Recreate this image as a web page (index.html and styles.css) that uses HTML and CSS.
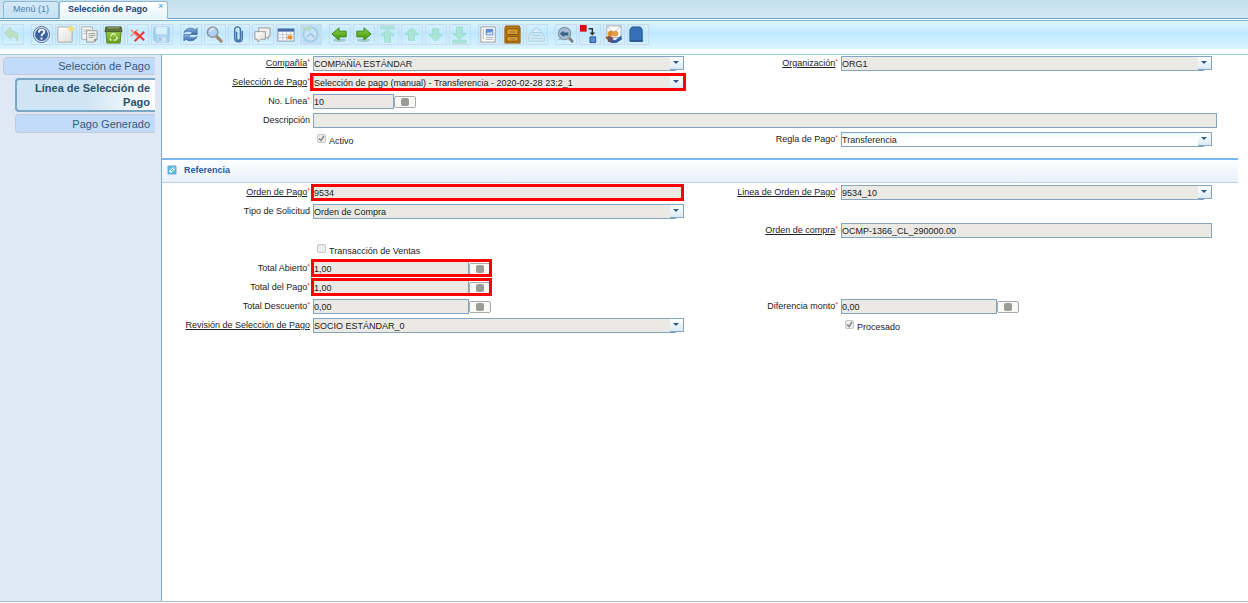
FILE: index.html
```html
<!DOCTYPE html>
<html lang="es">
<head>
<meta charset="utf-8">
<title>Selección de Pago</title>
<link rel="stylesheet" href="styles.css">
</head>
<body>
<svg class="defs" aria-hidden="true">
  <defs>
    <linearGradient id="green" x1="0" y1="0" x2="0" y2="1"><stop offset="0" stop-color="#8fd03c"/><stop offset="1" stop-color="#3c9410"/></linearGradient>
    <linearGradient id="lime" x1="0" y1="0" x2="0" y2="1"><stop offset="0" stop-color="#9ccb45"/><stop offset="1" stop-color="#6a9f22"/></linearGradient>
    <linearGradient id="blue" x1="0" y1="0" x2="0" y2="1"><stop offset="0" stop-color="#8fb4e4"/><stop offset="1" stop-color="#3a68a8"/></linearGradient>
    <linearGradient id="paper" x1="0" y1="0" x2="1" y2="1"><stop offset="0" stop-color="#ffffff"/><stop offset="1" stop-color="#dcdcd8"/></linearGradient>
    <symbol id="arrow-left" viewBox="0 0 20 20"><ellipse cx="10" cy="16" rx="7" ry="2" fill="#6d9a8a" opacity=".4"/><path d="M2 9.500 9.500 3v3.500H17v6H9.500V16z" fill="url(#green)" stroke="#3f8519"/></symbol>
    <symbol id="arrow-up" viewBox="0 0 20 20"><path d="m10 3 7 7h-4v6H7v-6H3z" fill="#8fe0b0" stroke="#75c99d"/></symbol>
  </defs>
</svg>
<nav class="tabs">
  <button class="tab">Menú (1)</button>
  <button class="tab tab-active">Selección de Pago</button>
  <button class="tab-close" aria-label="Cerrar">×</button>
</nav>
<header class="toolbar">
  <div class="tools">
    <button class="tool faded" aria-label="Deshacer"><svg viewBox="0 0 20 20"><path d="M2 8 8 2v4c6 0 9 4 7 11-1-4-3-5-7-5v3z" fill="#b9d68a" stroke="#9cc07c"/></svg></button>
  </div>
  <div class="tools">
    <button class="tool" aria-label="Ayuda"><svg viewBox="0 0 20 20"><circle cx="10" cy="10" r="8.500" fill="#d5dfed" stroke="#5b6f91"/><circle cx="10" cy="10" r="6.800" fill="#3b619e"/><path d="M7.300 8c0-4 5.600-4 5.600-.8 0 2.200-2.800 2-2.800 4.500M10 13.200v2" fill="none" stroke="#fff" stroke-width="2"/></svg></button>
    <button class="tool" aria-label="Nuevo"><svg viewBox="0 0 20 20"><path d="M2 2h15v16H2z" fill="url(#paper)" stroke="#aaa9a0"/><circle cx="16" cy="4" r="2.500" fill="#f6e36e"/><path d="M16 0v8M12 4h8" stroke="#f3df62"/></svg></button>
    <button class="tool" aria-label="Copiar"><svg viewBox="0 0 20 20"><path d="M2 2h11v13H2z" fill="#f7f7f5" stroke="#aaa"/><path d="M4 5h7M4 7h7M4 9h7" stroke="#bbb"/><path d="M7 6h11v9l-3 3H7z" fill="url(#paper)" stroke="#999"/><path d="M9 9h7M9 11h7M9 13h5" stroke="#999"/><path d="M15 18v-3h3z" fill="#777"/></svg></button>
    <button class="tool" aria-label="Eliminar"><svg viewBox="0 0 20 20"><path d="M2 6h16l-1 13H3z" fill="url(#lime)" stroke="#5d8424"/><path d="M2 2h16l1 5H1z" fill="#5d7236" stroke="#465a30"/><path d="M4 3h12" stroke="#a1b485"/><path d="m7 12 2-3h2l1 2m1 1 1 2-2 2h-2m-2 0H7l-1-2" fill="none" stroke="#e1f1c9" stroke-width="1.300"/></svg></button>
    <button class="tool" aria-label="Eliminar selección"><svg viewBox="0 0 20 20"><path d="m3 5 7 7m0-7-7 7" stroke="#ef8f80" stroke-width="1.600"/><path d="m7 7 10 9m0-9L7 17" stroke="#f03a34" stroke-width="2.200"/></svg></button>
    <button class="tool faded" aria-label="Guardar"><svg viewBox="0 0 20 20"><path d="M2 2h16v16H4l-2-2z" fill="#83b6e5" stroke="#6aa0d2"/><path d="M4 2h12v8H4z" fill="#eaf3fa"/><path d="M6 12h9v6H6z" fill="#d1d9e2"/><path d="M7 13h3v4H7z" fill="#709ed0"/></svg></button>
  </div>
  <div class="tools">
    <button class="tool" aria-label="Refrescar"><svg viewBox="0 0 20 20"><path d="M3 8c2-5 8-6 12-3l2-2v7h-7l2-2C9 6 6 6 3 8z" fill="url(#blue)" stroke="#3f699f" stroke-width=".7"/><path d="M17 12c-2 5-8 6-12 3l-2 2v-7h7l-2 2c3 2 6 2 9 0z" fill="url(#blue)" stroke="#3f699f" stroke-width=".7"/></svg></button>
    <button class="tool" aria-label="Buscar"><svg viewBox="0 0 20 20"><path d="m12 12 5 5" stroke="#a28a72" stroke-width="3.500" stroke-linecap="round"/><circle cx="8" cy="7.500" r="5.500" fill="#add2f5" stroke="#8d9198" stroke-width="1.500"/><path d="M5 7c1-3 3-3 5-3" stroke="#fff" fill="none"/></svg></button>
    <button class="tool" aria-label="Adjuntar"><svg viewBox="0 0 20 20"><path d="M8 7v7c0 3 4 3 4 0V5c0-4-6-4-6 0v9c0 5 8 5 8 0V6" fill="none" stroke="#426fa9" stroke-width="1.500"/></svg></button>
    <button class="tool" aria-label="Notas"><svg viewBox="0 0 20 20"><path d="M6 3h12v9h-2v3l-3-3H6z" fill="#eee" stroke="#999"/><path d="M2 7h11v8H8l-3 3v-3H2z" fill="url(#paper)" stroke="#9b9b98"/></svg></button>
    <button class="tool" aria-label="Cuadrícula"><svg viewBox="0 0 20 20"><path d="M1 4h17v13H1z" fill="#f9fafb" stroke="#8093ad"/><path d="M1 4h17v3H1z" fill="#416eaa"/><path d="M2 10h16M2 13.500h16M6 7v10M10 7v10M14 7v10" stroke="#c6ccd1"/><path d="M11 11h5v4h-5z" fill="#ed8e32"/></svg></button>
    <button class="tool tool-shaded faded" aria-label="Historial"><svg viewBox="0 0 20 20"><circle cx="10" cy="10" r="7.500" fill="#d5e9f5" stroke="#86b8d8" stroke-width="2"/><path d="m6 13 4-4 4 4" fill="none" stroke="#78a5c9" stroke-width="1.500"/><path d="M2 7V1l2 2c3-2 6-2 8 0L8 7 6 5z" fill="#acd78d"/></svg></button>
  </div>
  <div class="tools">
    <button class="tool" aria-label="Anterior"><svg><use href="#arrow-left"/></svg></button>
    <button class="tool" aria-label="Siguiente"><svg class="flip-x"><use href="#arrow-left"/></svg></button>
    <button class="tool faded" aria-label="Primero"><svg viewBox="0 0 20 20"><path d="M3 1h14v3H3zM10 5l7 6h-4v7H7v-7H3z" fill="#8fe0b0" stroke="#75c99d"/></svg></button>
    <button class="tool faded" aria-label="Arriba"><svg><use href="#arrow-up"/></svg></button>
    <button class="tool faded" aria-label="Abajo"><svg class="flip-y"><use href="#arrow-up"/></svg></button>
    <button class="tool faded" aria-label="Último"><svg class="flip-y" viewBox="0 0 20 20"><path d="M3 1h14v3H3zM10 5l7 6h-4v7H7v-7H3z" fill="#8fe0b0" stroke="#75c99d"/></svg></button>
  </div>
  <div class="tools">
    <button class="tool" aria-label="Informe"><svg viewBox="0 0 20 20"><path d="M2 2h15v16H2z" fill="#fff" stroke="#9b9b98"/><path d="M7 4h8v7H7z" fill="#5d8fce"/><path d="M8 9c2-3 4 1 6-3v4H8z" fill="#d7e8fa"/><path d="M4.500 4v11M7 13h8M7 15h8" stroke="#aaa"/></svg></button>
    <button class="tool" aria-label="Archivar"><svg viewBox="0 0 20 20"><path d="M3 1h14l1 2v16H2V3z" fill="#bd7916" stroke="#8e5a0b"/><path d="M4 4h12v6H4zM4 12h12v5H4z" fill="#dc9a2b" stroke="#82540c"/><path d="M8 7h4v1H8zM8 14h4v1H8z" fill="#ffe0a2" stroke="#835c22" stroke-width=".6"/></svg></button>
    <button class="tool faded" aria-label="Imprimir"><svg viewBox="0 0 20 20"><path d="M6 8V5h2l2-3 2 3h2v3" fill="#e6f5fc" stroke="#89afc5"/><path d="M4 8h12l2 4v5H2v-5z" fill="#d8e7ef" stroke="#94afbf"/><path d="M5 11h10M4 14h12" stroke="#93adbe"/></svg></button>
  </div>
  <div class="tools">
    <button class="tool" aria-label="Acercar"><svg viewBox="0 0 20 20"><path d="m13 13 4 4" stroke="#817e80" stroke-width="3" stroke-linecap="round"/><circle cx="9" cy="9" r="6.500" fill="#a5bdd2" stroke="#8796a2" stroke-width="1.300"/><path d="M4 9 8 6v2h5v3H8v2z" fill="#385f88"/><path d="M2 15h7" stroke="#97a9b5"/></svg></button>
    <button class="tool" aria-label="Flujo de trabajo"><svg viewBox="0 0 20 20"><path d="M0 0h7v7H0z" fill="#d80c14"/><path d="M9 4h4v6" stroke="#333" stroke-width="1.500" fill="none"/><path d="m10 8 3 3 3-3z" fill="#333"/><path d="M10.500 12.500h6v6h-6z" fill="#5c8dd3" stroke="#264e92"/></svg></button>
    <button class="tool" aria-label="Solicitudes"><svg viewBox="0 0 20 20"><path d="M3 1h15v12H3z" fill="#fff" stroke="#aaa"/><path d="m3 1 7 7 8-7" fill="none" stroke="#bbb"/><circle cx="7" cy="9" r="3" fill="#d98d32"/><circle cx="12" cy="9" r="3" fill="#e29b44"/><path d="m1 13 5-2 4 3-4 4z" fill="#a5632c"/><path d="m7 15 5 1 6-5 1 4-6 4H7z" fill="#345fa8"/><path d="M4 13h5v5H4z" fill="#68506a"/></svg></button>
    <button class="tool" aria-label="Producto"><svg viewBox="0 0 20 20"><path d="M4 2h9l2 3v12H2V5z" fill="#376fb6" stroke="#2c5894"/><path d="M2 17h14" stroke="#1d417b"/></svg></button>
  </div>
</header>
<div class="workspace">
  <nav class="sidebar">
    <button class="side-tab side-root">Selección de Pago</button>
    <button class="side-tab side-active">Línea de Selección de Pago</button>
    <button class="side-tab">Pago Generado</button>
  </nav>
  <main class="main">
    <form class="form">
      <label class="label link required" for="company">Compañía</label>
      <div class="combo"><select id="company" disabled><option>COMPAÑÍA ESTÁNDAR</option></select><span class="arrow"></span></div>
      <label class="label link required" for="org">Organización</label>
      <div class="combo"><select id="org" disabled><option>ORG1</option></select><span class="arrow"></span></div>

      <label class="label link required" for="selection">Selección de Pago</label>
      <div class="combo marked marked-wide"><select id="selection" disabled><option>Selección de pago (manual) - Transferencia - 2020-02-28 23:2_1</option></select><span class="arrow"></span></div>

      <label class="label required first" for="line">No. Línea</label>
      <div class="number number-short"><input id="line" type="text" value="10" readonly><button type="button" class="calc" aria-label="Calculadora"></button></div>

      <label class="label first" for="description">Descripción</label>
      <div class="text full"><input id="description" type="text" readonly></div>

      <div class="check second"><input id="active" type="checkbox" checked disabled><label for="active">Activo</label></div>
      <label class="label required" for="rule">Regla de Pago</label>
      <div class="combo"><select id="rule"><option>Transferencia</option></select><span class="arrow"></span></div>
    </form>
    <h2 class="group"><svg viewBox="0 0 10 10"><path d="M1 1h8v8H1z" fill="#4dbbe6" stroke="#6fa9c4"/><path d="M2.500 7.500V5.500l3-3h2v2l-3 3z" fill="#fff"/><path d="m4 6 2.500-2.500" stroke="#3a9fd1"/></svg>Referencia</h2>
    <form class="form">
      <label class="label link required" for="order">Orden de Pago</label>
      <div class="text marked"><input id="order" type="text" value="9534" readonly></div>
      <label class="label link required" for="order-line">Linea de Orden de Pago</label>
      <div class="combo"><select id="order-line" disabled><option>9534_10</option></select><span class="arrow"></span></div>

      <label class="label" for="type">Tipo de Solicitud</label>
      <div class="combo"><select id="type" disabled><option>Orden de Compra</option></select><span class="arrow"></span></div>

      <label class="label link required third row-3" for="purchase">Orden de compra</label>
      <div class="text fourth row-3"><input id="purchase" type="text" value="OCMP-1366_CL_290000.00" readonly></div>

      <div class="check second row-4"><input id="sales" type="checkbox" disabled><label for="sales">Transacción de Ventas</label></div>

      <label class="label required first row-5" for="open">Total Abierto</label>
      <div class="number marked marked-wide second row-5"><input id="open" type="text" value="1,00" readonly><button type="button" class="calc" aria-label="Calculadora"></button></div>

      <label class="label required first row-6" for="total">Total del Pago</label>
      <div class="number marked marked-wide second row-6"><input id="total" type="text" value="1,00" readonly><button type="button" class="calc" aria-label="Calculadora"></button></div>

      <label class="label required first row-7" for="discount">Total Descuento</label>
      <div class="number second row-7"><input id="discount" type="text" value="0,00" readonly><button type="button" class="calc" aria-label="Calculadora"></button></div>
      <label class="label required third row-7" for="difference">Diferencia monto</label>
      <div class="number fourth row-7"><input id="difference" type="text" value="0,00" readonly><button type="button" class="calc" aria-label="Calculadora"></button></div>

      <label class="label link first row-8" for="review">Revisión de Selección de Pago</label>
      <div class="combo second row-8"><select id="review" disabled><option>SOCIO ESTÁNDAR_0</option></select><span class="arrow"></span></div>
      <div class="check fourth row-8"><input id="processed" type="checkbox" checked disabled><label for="processed">Procesado</label></div>
    </form>
  </main>
</div>
</body>
</html>
```

FILE: styles.css
```css
* { box-sizing: border-box; }

body {
  margin: 0;
  min-height: 100vh;
  display: flex;
  flex-direction: column;
  font: 9px/12px "Liberation Sans", Arial, sans-serif;
  color: #333;
  background: #fff;
}

button, input, select { font: inherit; color: inherit; margin: 0; padding: 0; }
.defs { position: absolute; width: 0; height: 0; }

.tabs {
  position: relative;
  display: flex;
  height: 19px;
  padding: 1px 0 0 3px;
  background: linear-gradient(#c3dfef, #d3e9f4);
  border-bottom: 1px solid #6ba0c6;
}
.tab {
  height: 17px;
  padding: 0 9px 2px 9px;
  border: 1px solid #8db9d5;
  border-bottom: 0;
  border-radius: 3px 3px 0 0;
  background: linear-gradient(#d5eaf8, #c5e2f4);
  color: #4a7fb0;
}
.tab-active {
  height: 18px;
  padding: 0 19px 3px 8px;
  background: linear-gradient(#fff, #e6f4fc);
  color: #1b3f7d;
  font-weight: bold;
}
.tab-close {
  align-self: flex-start;
  width: 8px;
  height: 10px;
  margin-left: -11px;
  border: 0;
  background: none;
  color: #3b97d3;
  line-height: 10px;
  z-index: 1;
}

.toolbar {
  display: flex;
  gap: 7px;
  height: 36px;
  padding: 2px 0 0 2px;
  border-top: 1px solid #fff;
  border-bottom: 1px solid #9ccbd6;
  background:
    linear-gradient(#7fafd0, #7fafd0) 0 0 / 100% 1px no-repeat,
    linear-gradient(#dcf5ff, #bfe8ff 45%, #c4ecff 55%, #dbf4ff) 0 1px / 100% 28px no-repeat,
    #fff;
}
.tools { display: flex; gap: 2px; padding-top: 2px; }
.tool {
  display: flex;
  align-items: flex-start;
  justify-content: flex-start;
  width: 22px;
  height: 21px;
  border: 1px solid #c8d9f0;
  background: none;
}
.tool svg { width: 19px; height: 19px; }
.tool-shaded { background: #c0e0f8; }
.faded svg { opacity: 0.5; }
.flip-x { transform: scaleX(-1); }
.flip-y { transform: scaleY(-1); }

.workspace { flex: 1; display: flex; border-bottom: 1px solid #a3bfd5; margin-bottom: 1px; }
.sidebar {
  width: 162px;
  flex: none;
  display: flex;
  flex-direction: column;
  align-items: stretch;
  gap: 2px;
  padding: 2px 6px 0 15px;
  background: #dfe9f5;
  border-right: 1px solid #84abc4;
}
.side-tab {
  min-height: 19px;
  padding: 0 5px 0 6px;
  border: 1px solid #c5c9d2;
  border-right: 0;
  border-radius: 4px 0 0 4px;
  background: #c3dbfb;
  color: #335a78;
  font-size: 11px;
  line-height: 14px;
  text-align: right;
}
.side-root { margin-left: -12px; height: 18px; min-height: 18px; margin-bottom: 1px; }
.side-active {
  min-height: 34px;
  border: 2px solid #79a7c6;
  border-right: 0;
  background: linear-gradient(90deg, #cfe5f4 50%, #fff);
  color: #28516a;
  font-weight: bold;
}

.main { flex: 1; min-width: 0; padding-right: 10px; }
.form {
  display: grid;
  grid-template-columns: 148px 1fr 151px 1fr;
  grid-auto-rows: 15px;
  gap: 4px 3px;
  padding: 1px 26px 0 0;
}
.first { grid-column: 1; }
.second { grid-column: 2; }
.third { grid-column: 3; }
.fourth { grid-column: 4; }
.full { grid-column: 2 / 5; margin-right: -5px; }
.row-3 { grid-row: 3; }
.row-4 { grid-row: 4; }
.row-5 { grid-row: 5; }
.row-6 { grid-row: 6; }
.row-7 { grid-row: 7; }
.row-8 { grid-row: 8; }

.label { justify-self: end; white-space: nowrap; line-height: 14px; color: #222; }
.link { text-decoration: underline; text-underline-offset: 1px; }
.required::after {
  content: "*";
  display: inline-block;
  color: #f33;
  font-size: 7px;
  line-height: 11px;
  vertical-align: top;
}

.text, .combo, .number { position: relative; display: flex; min-width: 0; }
.text input, .number input, .combo select {
  width: 100%;
  min-width: 0;
  height: 15px;
  border: 1px solid #83a5c2;
  border-radius: 0;
  outline: 0;
  background: #eae9e4;
  color: #1b1b1b;
  opacity: 1;
}
.combo select {
  appearance: none;
  background: linear-gradient(#e8fafc, #fff 40%);
}
.combo select:disabled { background: #eae9e4; }
.combo { border-right: 8px solid transparent; }
.arrow {
  position: absolute;
  top: 0;
  right: -8px;
  width: 14px;
  height: 14px;
  border: 1px solid #83a5c2;
  border-left: 0;
  background: linear-gradient(#fff, #d8ebf6);
  pointer-events: none;
}
.arrow::before {
  content: "";
  position: absolute;
  left: 3px;
  top: 4px;
  border: 3px solid transparent;
  border-top-color: #2b5a85;
  border-bottom: 0;
}

.number { justify-self: start; }
.number input { width: 156px; }
.number-short input { width: 81px; }
.calc {
  width: 22px;
  height: 12px;
  margin-top: 2px;
  border: 1px solid #a9a9a7;
  border-radius: 2px;
  background: #f8f8f7;
  display: grid;
  place-items: center;
}
.calc::before { content: ""; width: 8px; height: 8px; border-radius: 2px; background: #999b98; }

.marked::after {
  content: "";
  position: absolute;
  inset: -1px 0 -1px -2px;
  border: 3px solid #f00;
  pointer-events: none;
}
.marked-wide::after { inset: -2px -1px -1px -2px; }
.combo.marked::after { right: -10px; left: -3px; }

.check { display: flex; gap: 3px; padding-left: 4px; color: #222; }
.check input { appearance: none; width: 9px; height: 9px; margin-top: 2px; border: 1px solid #c6c6c6; border-radius: 2px; background: #eee; }
.check input:checked {
  background: #eee url("data:image/svg+xml,%3Csvg xmlns='http://www.w3.org/2000/svg' viewBox='0 0 7 7'%3E%3Cpath d='M1 3.500 3 5.500 6 1' fill='none' stroke='%23888' stroke-width='1.500'/%3E%3C/svg%3E");
}
.check label { line-height: 12px; padding-top: 3px; white-space: nowrap; }

.group {
  display: flex;
  align-items: center;
  gap: 7px;
  height: 25px;
  margin: 11px 0 1px;
  padding: 0 0 2px 5px;
  border-top: 2px solid #7db7f2;
  border-bottom: 1px solid #bccfe9;
  background: linear-gradient(#fff, #e7f1fb);
  color: #2b56a0;
  font-size: 9px;
}
.group svg { width: 10px; height: 10px; }
```
